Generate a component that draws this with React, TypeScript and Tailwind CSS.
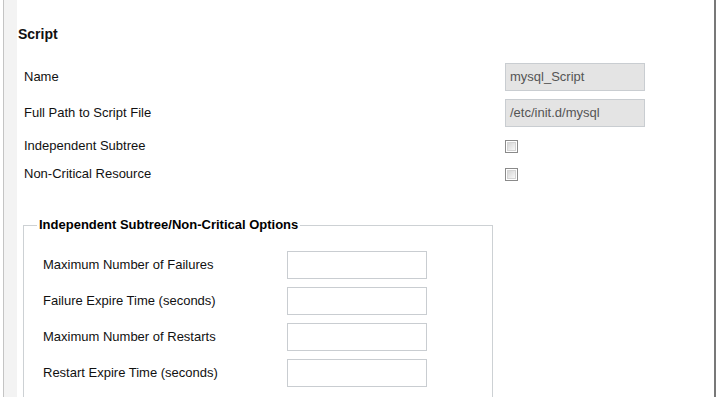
import React from 'react';

const font = { fontFamily: '"Liberation Sans", Arial, sans-serif' };

function Checkbox() {
  return (
    <div className="w-[13px] h-[13px] border border-[#8a8a8a] bg-white p-px">
      <div className="w-full h-full border border-[#d4d4d4] bg-gradient-to-br from-[#d6d6d6] to-[#f8f8f8]" />
    </div>
  );
}

function ReadOnlyField({ value }: { value: string }) {
  return (
    <div className="w-[140px] h-[28px] border border-[#c9cdd1] bg-[#e4e4e4] flex items-center pl-[4px] text-[13px] text-[#555]">
      {value}
    </div>
  );
}

const options = [
  'Maximum Number of Failures',
  'Failure Expire Time (seconds)',
  'Maximum Number of Restarts',
  'Restart Expire Time (seconds)',
];

export default function App() {
  return (
    <div className="w-[716px] h-[397px] overflow-hidden bg-white flex text-[#111]" style={font}>
      {/* left gutter */}
      <div className="w-[3px] shrink-0 bg-white" />
      <div className="w-px shrink-0 bg-[#c4c4c4]" />
      <div className="w-[13px] shrink-0 bg-[#f3f3f3]" />

      {/* main panel */}
      <div className="flex-1 flex flex-col">
        <div className="h-[4px] mr-[15px] bg-[#f1f1f1]" />

        <h2 className="mt-[26px] ml-px text-[14px] leading-[17px] font-bold">Script</h2>

        <div className="mt-[20px] flex flex-col">
          <div className="flex items-center h-[28px]">
            <span className="w-[488px] pl-[7px] text-[13px]">Name</span>
            <ReadOnlyField value="mysql_Script" />
          </div>
          <div className="mt-[8px] flex items-center h-[28px]">
            <span className="w-[488px] pl-[7px] text-[13px]">Full Path to Script File</span>
            <ReadOnlyField value="/etc/init.d/mysql" />
          </div>
          <div className="mt-[5px] flex items-center h-[28px]">
            <span className="w-[488px] pl-[7px] text-[13px]">Independent Subtree</span>
            <Checkbox />
          </div>
          <div className="flex items-center h-[28px]">
            <span className="w-[488px] pl-[7px] text-[13px]">Non-Critical Resource</span>
            <Checkbox />
          </div>
        </div>

        <fieldset className="mt-[30px] ml-[6px] w-[470px] border border-[#cdd1d4] pl-[13px] pb-[40px]">
          <legend className="px-[2px] text-[13px] leading-[14px] font-bold text-black">
            Independent Subtree/Non-Critical Options
          </legend>
          <div className="mt-[19px] pl-[6px] flex flex-col gap-[8px]">
            {options.map((label) => (
              <div key={label} className="flex items-center h-[28px]">
                <span className="w-[244px] text-[13px]">{label}</span>
                <div className="w-[140px] h-[28px] border border-[#c9cdd1] bg-white" />
              </div>
            ))}
          </div>
        </fieldset>
      </div>

      {/* right edge */}
      <div className="w-[2px] shrink-0 bg-[#787878]" />
    </div>
  );
}
